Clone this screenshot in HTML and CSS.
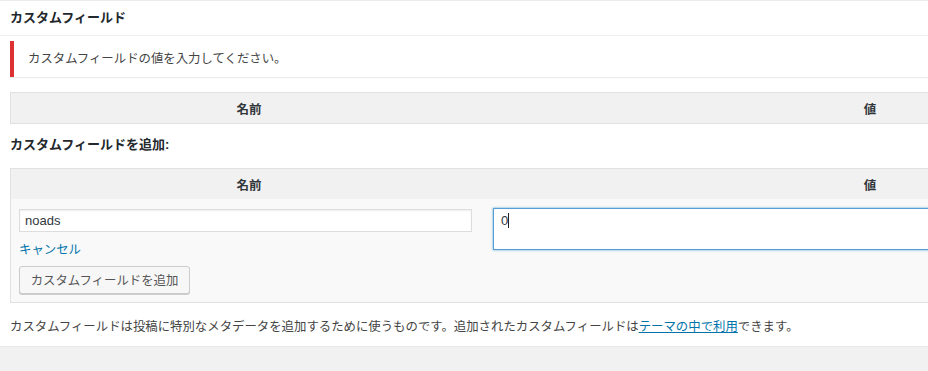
FILE: index.html
```html
<!DOCTYPE html>
<html lang="ja">
<head>
  <meta charset="UTF-8" />
  <meta name="viewport" content="width=device-width, initial-scale=1.0"/>
  <title>カスタムフィールド</title>
  <link rel="stylesheet" href="styles.css">
</head>
<body>
  <div class="postbox">
    <h2 class="hndle">カスタムフィールド</h2>
    <div class="inside">
      <div class="notice-error">カスタムフィールドの値を入力してください。</div>

      <!-- existing fields (empty) -->
      <table class="meta-table">
        <thead>
          <tr>
            <th class="col-name">名前</th>
            <th class="col-value">値</th>
          </tr>
        </thead>
      </table>

      <p class="add-title"><strong>カスタムフィールドを追加:</strong></p>

      <table class="meta-table new-meta">
        <thead>
          <tr>
            <th class="col-name">名前</th>
            <th class="col-value">値</th>
          </tr>
        </thead>
        <tbody>
          <tr>
            <td class="left-cell">
              <input class="meta-input" type="text" value="noads">
              <a class="cancel-link" href="#">キャンセル</a>
            </td>
            <td class="right-cell">
              <div class="meta-textarea">0<span class="caret"></span></div>
            </td>
          </tr>
          <tr>
            <td class="submit-cell" colspan="2">
              <button class="button">カスタムフィールドを追加</button>
            </td>
          </tr>
        </tbody>
      </table>

      <p class="desc">カスタムフィールドは投稿に特別なメタデータを追加するために使うものです。追加されたカスタムフィールドは<a href="#">テーマの中で利用</a>できます。</p>
    </div>
  </div>
  <div class="next-box"></div>
</body>
</html>
```

FILE: styles.css
```css
html, body {
  margin: 0;
  padding: 0;
  background: #fff;
  overflow: hidden;
  font-family: "Liberation Sans", "Noto Sans CJK JP", sans-serif;
  color: #444;
}

.postbox {
  width: 1264px;
  border-top: 1px solid #ececec;
  background: #fff;
}

.hndle {
  margin: 0;
  padding: 0 10px;
  height: 34px;
  line-height: 34px;
  font-size: 13px;
  font-weight: bold;
  color: #23282d;
  border-bottom: 1px solid #eee;
}

.inside {
  padding: 5px 0 9px 10px;
}

.notice-error {
  height: 36px;
  line-height: 36px;
  padding-left: 14px;
  border-left: 4px solid #dc3232;
  background: #fff;
  box-shadow: 0 1px 1px rgba(0, 0, 0, 0.08);
  font-size: 12.4px;
  color: #444;
}

.meta-table {
  width: 1244px;
  border-collapse: collapse;
  border: 1px solid #e1e1e1;
  margin-top: 15px;
  table-layout: fixed;
}

.meta-table th {
  background: #f1f1f1;
  height: 30px;
  padding: 0;
  font-size: 12.5px;
  font-weight: bold;
  color: #32373c;
  text-align: center;
}

.col-name {
  width: 476px;
}

.add-title {
  margin: 11px 0 0;
  line-height: 20px;
  font-size: 13px;
  color: #23282d;
}

.new-meta {
  margin-top: 13px;
}

.new-meta tbody td {
  background: #f9f9f9;
  vertical-align: top;
}

.left-cell {
  padding: 10px 14px 0 8px;
}

.meta-input {
  display: block;
  box-sizing: border-box;
  width: 453px;
  height: 23px;
  margin: 0;
  padding: 0 5px;
  border: 1px solid #ddd;
  box-shadow: inset 0 1px 2px rgba(0, 0, 0, 0.07);
  background: #fff;
  font-family: "Liberation Sans", sans-serif;
  font-size: 13px;
  color: #32373c;
}

.cancel-link {
  display: block;
  margin-top: 7px;
  line-height: 22px;
  font-size: 12.4px;
  color: #0073aa;
  text-decoration: none;
}

.right-cell {
  padding: 9px 0 0 6px;
}

.meta-textarea {
  box-sizing: border-box;
  height: 42px;
  padding: 3px 7px;
  border: 1px solid #5b9dd9;
  box-shadow: 0 0 2px rgba(30, 140, 190, 0.8);
  background: #fff;
  font-size: 13px;
  line-height: 18px;
  color: #32373c;
}

.caret {
  display: inline-block;
  width: 1px;
  height: 15px;
  background: #222;
  vertical-align: -3px;
}

.submit-cell {
  padding: 5px 8px 8px;
}

.button {
  display: block;
  height: 28px;
  width: 171px;
  padding: 0 10px;
  border: 1px solid #ccc;
  border-radius: 3px;
  background: #f7f7f7;
  box-shadow: 0 1px 0 #ccc;
  font-family: "Liberation Sans", "Noto Sans CJK JP", sans-serif;
  font-size: 12.4px;
  color: #555;
  cursor: pointer;
}

.desc {
  margin: 14px 0 0;
  line-height: 20px;
  font-size: 12.4px;
  color: #444;
}

.desc a {
  color: #0073aa;
  text-decoration: underline;
}

.next-box {
  height: 40px;
  background: #f1f1f1;
  border-top: 1px solid #e9e9e9;
}
```
